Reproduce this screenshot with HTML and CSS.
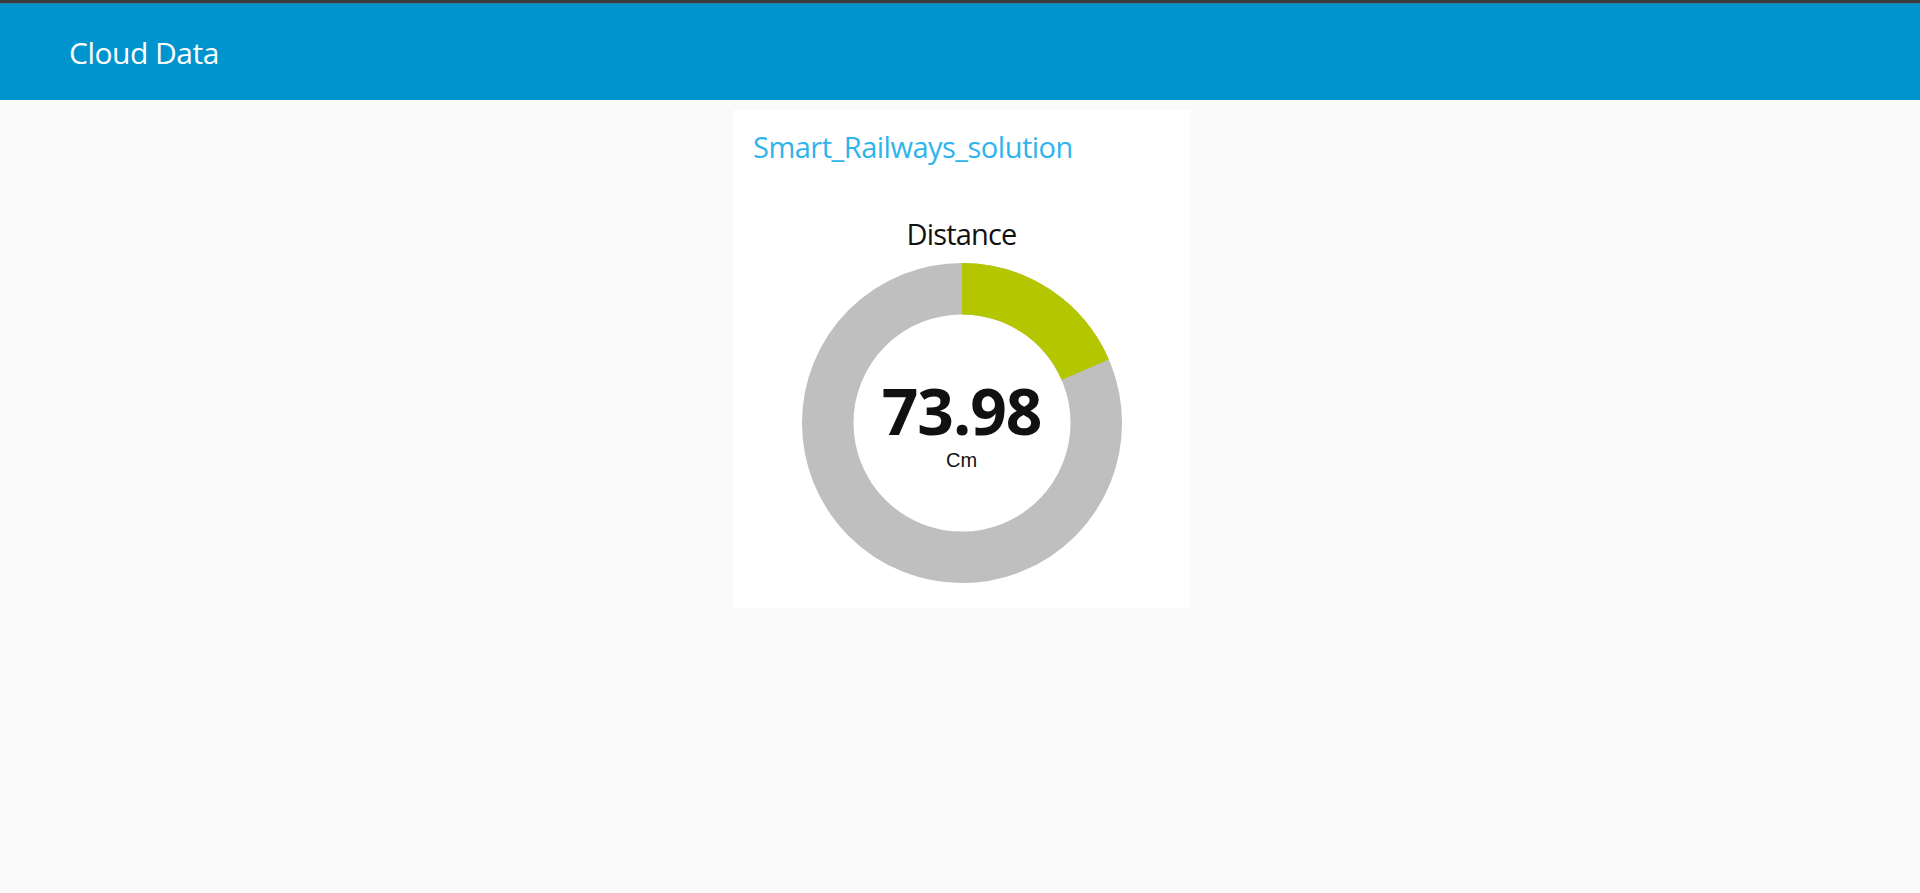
FILE: index.html
```html
<!DOCTYPE html>
<html lang="en">
<head>
<meta charset="utf-8">
<title>Cloud Data</title>
<link rel="stylesheet" href="styles.css">
</head>
<body>
<div class="topstrip"></div>
<header class="toolbar">
  <h1 class="toolbar-title">Cloud Data</h1>
</header>
<main class="content">
  <section class="card">
    <h2 class="card-title">Smart_Railways_solution</h2>
    <div class="gauge-widget">
      <div class="gauge-label">Distance</div>
      <div class="gauge">
        <svg class="gauge-svg" width="320" height="320" viewBox="0 0 320 320">
          <circle cx="160" cy="160" r="134.25" fill="none" stroke="#bfbfbf" stroke-width="51.5"/>
          <circle cx="160" cy="160" r="134.25" fill="none" stroke="#b4c600" stroke-width="51.5"
                  stroke-dasharray="156.05 687.5" transform="rotate(-90 160 160)"/>
        </svg>
        <div class="gauge-value">
          <div class="gauge-number">73.98</div>
          <div class="gauge-unit">Cm</div>
        </div>
      </div>
    </div>
  </section>
</main>
</body>
</html>
```

FILE: styles.css
```css
html, body {
  margin: 0;
  padding: 0;
}
body {
  background: #fafafa;
  font-family: "Open Sans", "Noto Sans", sans-serif;
  width: 1920px;
  height: 893px;
  overflow: hidden;
}
.topstrip {
  height: 3px;
  background: #3b3d3f;
  border-bottom: 1px solid #2a7fa6;
}
.toolbar {
  height: 96px;
  background: #0094ce;
  display: flex;
  align-items: center;
  padding-left: 69px;
  box-sizing: border-box;
}
.toolbar-title {
  margin: 2px 0 0 0;
  font-weight: 400;
  font-size: 30px;
  line-height: 36px;
  letter-spacing: -0.5px;
  color: #ffffff;
}
.content {
  display: flex;
  justify-content: center;
  padding-top: 10px;
  padding-left: 3px;
}
.card {
  width: 457px;
  height: 498px;
  box-sizing: border-box;
  background: #ffffff;
  padding: 19px 20px 25px 20px;
}
.card-title {
  margin: 0;
  font-weight: 500;
  font-size: 29px;
  line-height: 35px;
  letter-spacing: -0.5px;
  color: #2eb4ec;
}
.gauge-widget {
  margin-top: 52px;
  display: flex;
  flex-direction: column;
  align-items: center;
}
.gauge-label {
  font-weight: 500;
  font-size: 29px;
  line-height: 36px;
  letter-spacing: -0.8px;
  color: #111111;
}
.gauge {
  margin-top: 11px;
  display: grid;
  width: 320px;
  height: 320px;
}
.gauge-svg {
  grid-area: 1 / 1;
  display: block;
}
.gauge-value {
  grid-area: 1 / 1;
  align-self: start;
  margin-top: 118px;
  text-align: center;
}
.gauge-number {
  font-weight: 700;
  font-size: 64px;
  line-height: 60px;
  letter-spacing: -1px;
  color: #111111;
}
.gauge-unit {
  margin-top: 8px;
  font-family: "Liberation Sans", Arial, sans-serif;
  font-size: 20px;
  line-height: 22px;
  color: #111111;
}
```
